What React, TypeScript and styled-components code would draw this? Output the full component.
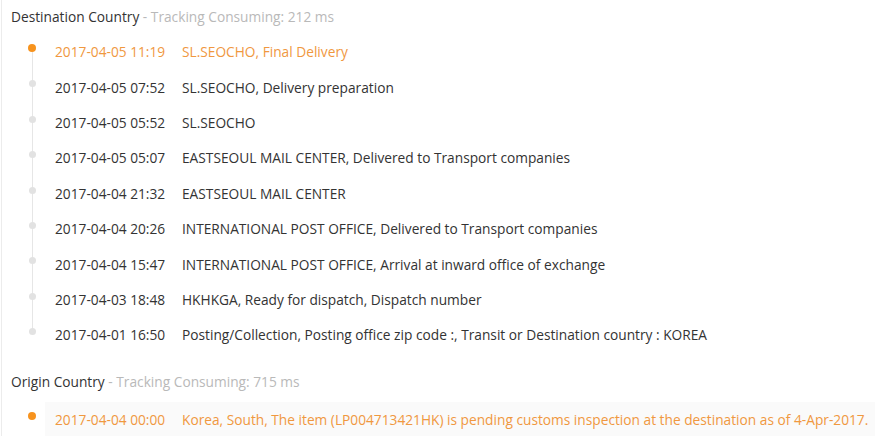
import React from "react";
import styled, { createGlobalStyle } from "styled-components";

const GlobalStyle = createGlobalStyle`
  html, body {
    margin: 0;
    padding: 0;
    background: #fff;
  }
  body {
    font-family: "Open Sans", "Noto Sans", Arial, sans-serif;
    font-size: 13.72px;
    color: #333;
  }
`;

interface TrackEvent {
  time: string;
  desc: string;
}

interface Section {
  title: string;
  consuming: number;
  events: TrackEvent[];
}

const sections: Section[] = [
  {
    title: "Destination Country",
    consuming: 212,
    events: [
      { time: "2017-04-05 11:19", desc: "SL.SEOCHO, Final Delivery" },
      { time: "2017-04-05 07:52", desc: "SL.SEOCHO, Delivery preparation" },
      { time: "2017-04-05 05:52", desc: "SL.SEOCHO" },
      {
        time: "2017-04-05 05:07",
        desc: "EASTSEOUL MAIL CENTER, Delivered to Transport companies",
      },
      { time: "2017-04-04 21:32", desc: "EASTSEOUL MAIL CENTER" },
      {
        time: "2017-04-04 20:26",
        desc: "INTERNATIONAL POST OFFICE, Delivered to Transport companies",
      },
      {
        time: "2017-04-04 15:47",
        desc: "INTERNATIONAL POST OFFICE, Arrival at inward office of exchange",
      },
      {
        time: "2017-04-03 18:48",
        desc: "HKHKGA, Ready for dispatch, Dispatch number",
      },
      {
        time: "2017-04-01 16:50",
        desc: "Posting/Collection, Posting office zip code :, Transit or Destination country : KOREA",
      },
    ],
  },
  {
    title: "Origin Country",
    consuming: 715,
    events: [
      {
        time: "2017-04-04 00:00",
        desc: "Korea, South, The item (LP004713421HK) is pending customs inspection at the destination as of 4-Apr-2017.",
      },
    ],
  },
];

const Page = styled.div`
  min-height: 436px;
  margin-left: 1px;
  border-left: 1px solid #ececec;
  overflow: hidden;
`;

const Header = styled.div`
  height: 34px;
  line-height: 34px;
  padding-left: 9px;
  color: #333;
  white-space: nowrap;
`;

const Consuming = styled.span`
  color: #b9b9b9;
`;

const Timeline = styled.ul<{ $single?: boolean }>`
  list-style: none;
  margin: 0 0 ${(p) => (p.$single ? 0 : 12)}px 0;
  padding: ${(p) => (p.$single ? "3px" : "0")} 0 0 43px;
`;

const Item = styled.li<{ $active?: boolean; $last?: boolean; $shade?: boolean }>`
  position: relative;
  display: flex;
  align-items: center;
  height: 35.4px;
  padding-left: 10px;
  white-space: nowrap;
  color: ${(p) => (p.$active ? "#f0983f" : "#333")};
  background: ${(p) => (p.$shade ? "#fafafa" : "transparent")};

  &::before {
    content: "";
    display: ${(p) => (p.$last ? "none" : "block")};
    position: absolute;
    left: -13px;
    top: 14px;
    height: 100%;
    width: 1px;
    background: #e6e6e6;
  }

  &::after {
    content: "";
    position: absolute;
    left: ${(p) => (p.$active ? -17 : -16)}px;
    top: ${(p) => (p.$active ? 10 : 11)}px;
    width: ${(p) => (p.$active ? 8 : 7)}px;
    height: ${(p) => (p.$active ? 8 : 7)}px;
    border-radius: 50%;
    background: ${(p) => (p.$active ? "#f7931e" : "#e2e2e2")};
  }
`;

const Time = styled.span`
  width: 127px;
  flex-shrink: 0;
`;

const Desc = styled.span``;

export default function App() {
  return (
    <Page>
      <GlobalStyle />
      {sections.map((s) => {
        const single = s.events.length === 1;
        return (
          <React.Fragment key={s.title}>
            <Header>
              {s.title} <Consuming>- Tracking Consuming: {s.consuming} ms</Consuming>
            </Header>
            <Timeline $single={single}>
              {s.events.map((e, i) => (
                <Item
                  key={e.time + i}
                  $active={i === 0}
                  $last={i === s.events.length - 1}
                  $shade={single}
                >
                  <Time>{e.time}</Time>
                  <Desc>{e.desc}</Desc>
                </Item>
              ))}
            </Timeline>
          </React.Fragment>
        );
      })}
    </Page>
  );
}
